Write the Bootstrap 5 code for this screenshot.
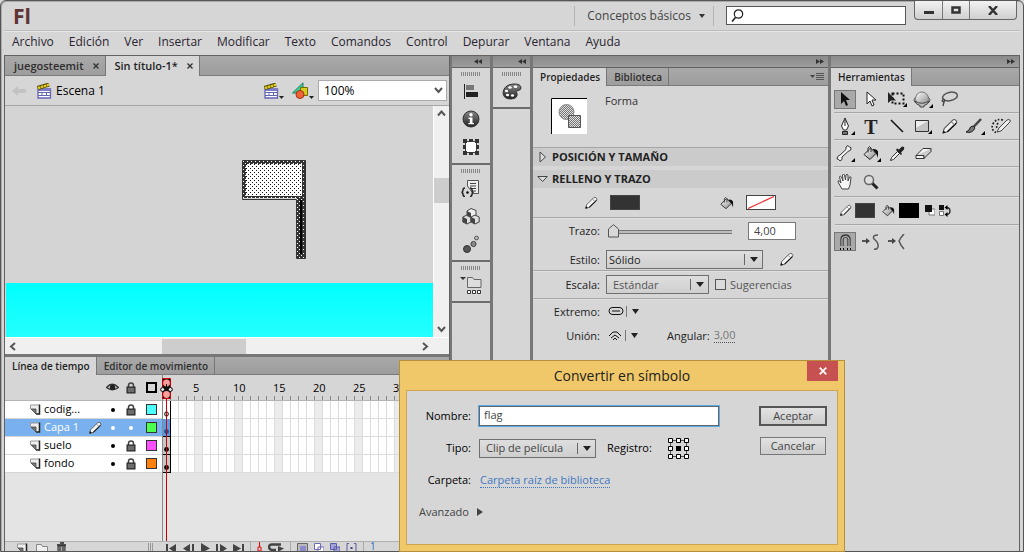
<!DOCTYPE html>
<html lang="es">
<head>
<meta charset="utf-8">
<meta name="viewport" content="width=device-width, initial-scale=1">
<title>Fl - Sin título-1*</title>
<link href="https://cdn.jsdelivr.net/npm/bootstrap@5.3.0/dist/css/bootstrap.min.css" rel="stylesheet">
<style>
:root{--face:#d6d6d6;--edge:#626262;--rule:#a6a6a6;--ink:#2b2b2b}
body{font:12px/16px "Open Sans","Noto Sans",sans-serif;color:#222;background:var(--face)}
.app{border:1px solid #555;border-radius:6px 6px 0 0;background:#d6d6d6;box-shadow:inset 1px 1px 0 #aaa}
button,input,select{font:inherit;color:inherit;border-radius:0}
button{background:none;border:0;padding:0}
svg{display:block;flex:none}
.ui{font-size:11px;line-height:16px}

/* title and menu */
.titlebar{height:30px;margin:0 3px;border-bottom:1px solid #bcbcbc;box-shadow:0 1px 0 #e6e6e6}
.brand-fl{font-size:21px;line-height:24px;color:#5e3434;padding-left:9px}
.vrule{width:1px;height:20px;background:#b4b4b4}
.search-box{width:180px;height:19px;border:1px solid #555;background:#fff}
.search-box input{border:0;outline:0;min-width:0;background:none}
.win-btns{border:1px solid #666;border-top:0;border-radius:0 0 4px 4px;height:19px;margin-right:3px;background:linear-gradient(#f2f2f2,#cfcfcf)}
.win-btns button{height:18px;width:27px;display:grid;place-items:center}
.win-btns button+button{border-left:1px solid #777}
.win-btns button:last-child{width:47px}
.menubar{height:24px;margin-left:3px;gap:15px;padding-bottom:2px}
.menubar a{color:#2a2430;text-decoration:none}

/* workspace columns */
.workspace{display:grid;grid-template-columns:minmax(0,1fr) 40px 40px 298px 191px;margin:0 3px;border:1px solid var(--edge);border-width:1px 1px 0 1px}
.left-col{display:grid;grid-template-rows:minmax(0,20fr) minmax(0,13fr);gap:3px;background:#777;border-right:1px solid var(--edge)}
.dock{border-left:3px solid #777}
.dock.first{border-left-width:2px}
.dock-top{height:12px;background:linear-gradient(#8a8a8a,#9d9d9d);border-bottom:1px solid var(--edge);padding-right:4px}
.dock.first .dock-top{padding-right:8px}
.tabstrip{background:linear-gradient(#a9a9a9,#9d9d9d);border-bottom:1px solid #7b7b7b}
.tabstrip button{font-weight:600;color:#2e2e2e;border-right:1px solid #777;margin-bottom:-1px;white-space:nowrap}
.tabstrip .on{background:var(--face);color:#1f1f1f}
.doc-tabs{height:20px;font-size:11px}
.doc-tabs button{padding:0 6px 0 9px;gap:9px}
.panel-tabs{height:18px;font-size:10px}
.panel-tabs button{padding:0 6px 0 7px}

/* document */
.editbar{height:30px;border-bottom:1px solid var(--rule);padding:0 2px 0 7px}
.zoom-pick{width:129px;height:21px;border:1px solid #aaa;appearance:none;padding:0 5px;color:#000;background:#fff url("data:image/svg+xml,%3Csvg xmlns='http://www.w3.org/2000/svg' width='9' height='7'%3E%3Cpath d='M1 1l3.500 4L8 1' fill='none' stroke='%23555' stroke-width='2'/%3E%3C/svg%3E") no-repeat right 3px center}
.stage{background:#d4d4d4;position:relative}
.sea{height:54px;background:linear-gradient(#00ffff,#24ffff);margin-left:1px}
.flag{position:absolute;left:237px;bottom:78px}
.sb-v{width:16px;background:#f0f0f0;border-left:1px solid #fff}
.sb-thumb{background:#cdcdcd;flex:none}
.sb-h{height:17px;background:#f0f0f0;border-top:1px solid #fff;padding:0 20px 0 4px}
.g1{flex:1}.g2{flex:2}.g5{flex:5}.g6{flex:6}

/* timeline */
.timeline{background:#e4e4e4}
.tl-cols{display:grid;grid-template-columns:157px minmax(0,1fr)}
.tl-head{height:26px;background:var(--face);border-bottom:1px solid #b4b4b4}
.lay{display:grid;grid-template-columns:17px 43px 16px 19px 18px 22px;padding-left:22px;height:18px;align-items:center;background:#fff;border-bottom:1px solid #d6d6d6;line-height:15px}
.lay>*{justify-self:center}
.lay>.nm{justify-self:start;align-self:start;white-space:nowrap}
.lay.head{background:none;border:0;height:25px}
.lay.sel{background:#79b0ee;color:#fff}
.sw{width:11px;height:11px;border:1px solid #333;display:block}
.frames{border-left:1px solid #888;position:relative}
.fr{height:18px;border-bottom:1px solid #dcdcdc;background:repeating-linear-gradient(90deg,transparent 0 7px,#dcdcdc 7px 8px),repeating-linear-gradient(90deg,#fff 0 32px,#ececec 32px 40px)}
.kf{width:8px;height:18px;border-right:1px solid #000;border-bottom:1px solid #000;background:#c8c8c8;display:grid;place-items:end center;padding-bottom:2px}
.ruler{height:25px;padding-left:30px;background:repeating-linear-gradient(90deg,transparent 0 7px,#888 7px 8px) 0 bottom/100% 4px no-repeat}
.ruler span{flex:0 0 40px}
.playhead{position:absolute;left:-1px;top:3px;bottom:0;width:9px}
.tl-foot{height:10px;background:var(--face);border-top:1px solid #b0b0b0;overflow:hidden}
.transport{gap:6px;line-height:8px;padding-left:4px}
.frame-no{font-size:10px;color:#2f6fbd}

/* icon docks */
.grp{border-bottom:2px solid #6c6c6c;padding:4px 0 2px}
.grip{width:20px;height:4px;margin:0 auto 1px 9px;background:repeating-linear-gradient(90deg,#888 0 1px,transparent 1px 2px)}
.grp button{display:grid;place-items:center;width:37px;height:28px}

/* properties */
.rule{border-bottom:1px solid var(--rule);box-shadow:0 1px 0 #e0e0e0}
.sect{height:18px;background:#cbcbcb;font-weight:700;gap:5px;padding-left:6px;line-height:16px}
.sect.open{padding-left:4px;gap:4px}
.lbl{width:67px;text-align:right;flex:none}
.inked{border:1px solid #444;width:30px;height:15px;padding:0;display:block}
.pick{height:19px;appearance:none;border:1px solid #707070;padding:0 6px;line-height:16px;background:url("data:image/svg+xml,%3Csvg xmlns='http://www.w3.org/2000/svg' width='18' height='11'%3E%3Cpath d='M.5 0v11' stroke='%23666'/%3E%3Cpath d='M6 3h8l-4 5z' fill='%23222'/%3E%3C/svg%3E") no-repeat right 0 center,linear-gradient(#dedede,#cfcfcf)}
.thick{appearance:none;width:124px;height:14px;background:linear-gradient(#777,#777) 0 6px/100% 1px no-repeat,linear-gradient(#777,#777) 0 9px/100% 1px no-repeat,linear-gradient(#bbb,#bbb) 0 7px/100% 2px no-repeat;margin:0}
.thick::-webkit-slider-thumb{appearance:none;width:11px;height:14px;background:url("data:image/svg+xml,%3Csvg xmlns='http://www.w3.org/2000/svg' width='11' height='14'%3E%3Cpath d='M.5 13V5L5.500 .7 10.500 5v8z' fill='%23d8d8d8' stroke='%23555'/%3E%3C/svg%3E")}
.num{width:48px;height:18px;border:1px solid #777;padding:0 5px 1px;background:#fff;color:#444}
.chk{appearance:none;width:11px;height:11px;border:1px solid #555;margin:0;background:#dcdcdc}
.dots{border-bottom:1px dotted #555;line-height:14px}

/* tools */
.tool-row{display:grid;grid-template-columns:repeat(7,26px);height:27px;align-items:center;margin-left:3px}
.tool-row button{width:22px;height:19px;display:grid;place-items:center;border:1px solid transparent}
.tool-row button.on{border-color:#777;background:#a9a9a9}
.type-t{font:700 20px/18px "Liberation Serif",serif;color:#222}

/* dialog */
.dlg{position:absolute;left:399px;top:360px;width:446px;min-height:192px;background:#f0c869;border:1px solid #b58f3c;padding:0 6px 6px}
.dlg-title{font-size:14px;line-height:20px;color:#222;padding:5px 0 4px}
.dlg-x{position:absolute;right:6px;top:0;width:31px;height:20px;background:#c75050;display:grid;place-items:center}
.dlg-body{background:var(--face);border:1px solid #cda552;height:155px;padding:15px 10px 0 0;color:#444}
.dlg-body .lbl{width:64px}
.name-box{width:240px;height:20px;border:1px solid #666;outline:1px solid #5aaae8;padding:0 4px 4px;background:#fff}
.push{width:66px;height:18px;border:1px solid #777;background:linear-gradient(#e2e2e2,#cdcdcd);line-height:14px}
.push.main{width:68px;height:20px;border:2px solid #555}
.dlg a{color:#4278c0;text-decoration:none;border-bottom:1px dotted #4278c0}
</style>
</head>
<body class="vh-100 overflow-hidden position-relative">
<svg width="0" height="0" class="position-absolute" aria-hidden="true">
<defs>
<linearGradient id="gm" x1="0" y1="0" x2="1" y2="1"><stop offset="0" stop-color="#fff"/><stop offset="1" stop-color="#888"/></linearGradient>
<linearGradient id="gd" x1="0" y1="0" x2="0" y2="1"><stop offset="0" stop-color="#888"/><stop offset="1" stop-color="#222"/></linearGradient>
<pattern id="pw" width="4" height="4" patternUnits="userSpaceOnUse"><rect width="4" height="4" fill="#fff"/><path d="M0 0h1v1H0zM2 2h1v1H2z" fill="#111"/></pattern>
<pattern id="pk" width="4" height="4" patternUnits="userSpaceOnUse"><rect width="4" height="4" fill="#333"/><path d="M1 1h1v1H1zM3 3h1v1H3z" fill="#fff"/></pattern>
<pattern id="ck" width="2" height="2" patternUnits="userSpaceOnUse"><rect width="2" height="2" fill="#ddd"/><path d="M0 0h1v1H0zM1 1h1v1H1z" fill="#777"/></pattern>
<symbol id="pencil" viewBox="0 0 16 16"><path d="M2 14l1-4 8-8q1.500-1.200 3 .2t.2 3L6 13z" fill="#f4f4f4" stroke="#555"/><path d="M6 13l8.200-8" stroke="#111" stroke-width="1.200"/><path d="M1.500 14.500l.7-3 2.300 2.300z" fill="#111"/><path d="M9.700 3.500l3 3" stroke="#888"/></symbol>
<symbol id="bucket" viewBox="0 0 17 16"><path d="M2 9.500L8.500 3l5.500 5.500L8 14.500z" fill="url(#gm)" stroke="#222"/><path d="M6 7.500V3q1.500-3 3 0v4" fill="none" stroke="#333"/><path d="M10.500 4q4.500-.5 5.500 2.500V13q-1-3-2-4.500z" fill="#111"/></symbol>
<symbol id="lock" viewBox="0 0 10 12"><path d="M2.500 6V3.500q0-2.500 2.500-2.500t2.500 2.500V6" fill="none" stroke="#444" stroke-width="1.500"/><rect x="1" y="5" width="8" height="6" fill="#555" stroke="#222"/><path d="M2 7h6M2 9h6" stroke="#aaa" stroke-width=".6"/></symbol>
<symbol id="page" viewBox="0 0 11 11"><path d="M1 1h8.500v9H6L1 5z" fill="#eee"/><path d="M.5 5V1H9" fill="none" stroke="#999"/><path d="M1 5h5v5z" fill="#777" stroke="#444" stroke-width=".8"/><path d="M9.500.5v9.500H6" fill="none" stroke="#222" stroke-width="1.500"/></symbol>
<symbol id="clap" viewBox="0 0 16 16"><path d="M2 6h12.500v9H2z" fill="#fff" stroke="#6464b4" stroke-width="1.300"/><path d="M2 9.500h12.500M2 12.500h12M6 10V12m4.500-2.500V12" stroke="#6464b4"/><path d="M2 6h12.500v2H2z" fill="#7c7cc8"/><path d="M1.500 5L13 1.500" stroke="#4a4200" stroke-width="4"/><path d="M2 5L13 1.700" stroke="#e2cc20" stroke-width="2.400" stroke-dasharray="2.500 .5"/></symbol>
</defs></svg>

<div class="app h-100 d-flex flex-column">
<header>
  <div class="titlebar d-flex align-items-center">
    <strong class="brand-fl">Fl</strong>
    <span class="vrule ms-auto"></span>
    <button class="d-flex align-items-center ps-2 ms-1" style="color:#444">Conceptos básicos<svg class="ms-2" width="6" height="4"><path d="M0 0h6L3 4z" fill="#333"/></svg></button>
    <span class="vrule mx-2"></span>
    <label class="search-box d-flex align-items-center ps-1 ms-1"><svg width="13" height="14" viewBox="0 0 13 14"><circle cx="7.500" cy="5" r="4.200" fill="none" stroke="#222" stroke-width="1.200"/><path d="M4.500 8.500L1 12.500" stroke="#222" stroke-width="1.700"/></svg><input type="search" aria-label="Buscar"></label>
    <div class="win-btns d-flex align-self-start ms-2">
      <button aria-label="Minimizar"><svg width="10" height="10"><path d="M0 6h10v3H0z" fill="#333"/></svg></button>
      <button aria-label="Maximizar"><svg width="10" height="8"><path d="M1.500 1.500h7v5h-7z" fill="none" stroke="#333" stroke-width="2.500"/></svg></button>
      <button aria-label="Cerrar"><svg width="10" height="9"><path d="M1 0l8 9M9 0L1 9" stroke="#333" stroke-width="2.400"/></svg></button>
    </div>
  </div>
  <nav class="menubar d-flex align-items-center ps-2">
    <a href="#">Archivo</a><a href="#">Edición</a><a href="#">Ver</a><a href="#">Insertar</a><a href="#">Modificar</a><a href="#">Texto</a><a href="#">Comandos</a><a href="#">Control</a><a href="#">Depurar</a><a href="#">Ventana</a><a href="#">Ayuda</a>
  </nav>
</header>

<main class="workspace flex-grow-1">
  <div class="left-col">
    <section class="d-flex flex-column overflow-hidden" style="background:#d6d6d6">
      <div class="tabstrip doc-tabs d-flex">
        <button class="d-flex align-items-center">juegosteemit<svg width="6" height="6"><path d="M.5.5l5 5m0-5l-5 5" stroke="#333" stroke-width="1.400"/></svg></button>
        <button class="on d-flex align-items-center">Sin título-1*<svg width="6" height="6"><path d="M.5.5l5 5m0-5l-5 5" stroke="#333" stroke-width="1.400"/></svg></button>
      </div>
      <div class="editbar d-flex align-items-center">
        <svg width="14" height="12" viewBox="0 0 14 12"><path d="M0 6l6-5v3h8v4H6v3z" fill="#c2c2c2"/></svg>
        <svg width="16" height="16" style="margin-left:10px"><use href="#clap"/></svg>
        <span class="ms-1 text-black">Escena 1</span>
        <button class="ms-auto d-flex align-items-end" aria-label="Editar escena"><svg width="16" height="16"><use href="#clap"/></svg><svg width="5" height="3"><path d="M0 0h5L2.500 3z" fill="#222"/></svg></button>
        <button class="ms-2 me-1 d-flex align-items-end" aria-label="Editar símbolos"><svg width="17" height="17"><path d="M.5 11L11 .8v10z" fill="#3ccf9c" stroke="#1c7f60"/><path d="M8.500 5.500h7v8h-7z" fill="#d8cc20" stroke="#746c00"/><circle cx="8" cy="12.500" r="4" fill="#f06438" stroke="#a03010"/></svg><svg width="5" height="3"><path d="M0 0h5L2.500 3z" fill="#222"/></svg></button>
        <select class="zoom-pick" aria-label="Zoom"><option>100%</option></select>
      </div>
      <div class="d-flex flex-grow-1">
        <div class="stage flex-grow-1 d-flex flex-column justify-content-end">
          <svg class="flag" width="64" height="99"><path d="M1 1h62v97h-8V38H1z" fill="url(#pk)"/><path d="M.5.5h63v98h-9V39.500H.5z" fill="none" stroke="#333"/><path d="M4 4h56v32H4z" fill="url(#pw)"/><path d="M58 40h2v54h-2z" fill="#000"/></svg>
          <div class="sea"></div>
        </div>
        <div class="sb-v d-flex flex-column align-items-center py-1">
          <svg width="9" height="7"><path d="M1 5.500l3.500-4 3.500 4" fill="none" stroke="#555" stroke-width="2"/></svg>
          <span class="g1"></span><span class="sb-thumb w-100" style="height:25px"></span><span class="g2"></span>
          <svg width="9" height="7"><path d="M1 1l3.500 4L8 1" fill="none" stroke="#555" stroke-width="2"/></svg>
        </div>
      </div>
      <div class="sb-h d-flex align-items-center">
        <svg width="7" height="9"><path d="M6 1L2 4.500 6 8" fill="none" stroke="#555" stroke-width="2"/></svg>
        <span class="g5"></span><span class="sb-thumb" style="width:84px;height:15px"></span><span class="g6"></span>
        <svg width="7" height="9"><path d="M1 1l4 3.500L1 8" fill="none" stroke="#555" stroke-width="2"/></svg>
      </div>
    </section>

    <section class="timeline d-flex flex-column overflow-hidden">
      <div class="tabstrip panel-tabs d-flex"><button class="on">Línea de tiempo</button><button>Editor de movimiento</button></div>
      <div class="tl-cols flex-grow-1">
        <div class="text-black">
          <div class="tl-head"><div class="lay head ui"><span></span><span></span><span></span>
            <svg width="13" height="9" viewBox="0 0 13 9"><path d="M.5 4.500Q6 -2 12.500 4.500 6 9 .5 4.500z" fill="#ccc" stroke="#333" stroke-width="1.300"/><circle cx="6.500" cy="4.300" r="2.700" fill="#222"/></svg>
            <svg width="10" height="12"><use href="#lock"/></svg>
            <span class="sw" style="border-width:2px;border-color:#000"></span></div></div>
          <div class="lay ui"><svg width="11" height="11"><use href="#page"/></svg><span class="nm">codig...</span><span></span><svg width="4" height="4"><circle cx="2" cy="2" r="2"/></svg><svg width="10" height="12"><use href="#lock"/></svg><span class="sw" style="background:#4dffff"></span></div>
          <div class="lay ui sel"><svg width="11" height="11"><use href="#page"/></svg><span class="nm">Capa 1</span><svg width="14" height="14"><use href="#pencil"/></svg><svg width="4" height="4"><circle cx="2" cy="2" r="2" fill="#fff"/></svg><svg width="4" height="4"><circle cx="2" cy="2" r="2" fill="#fff"/></svg><span class="sw" style="background:#4fff4f"></span></div>
          <div class="lay ui"><svg width="11" height="11"><use href="#page"/></svg><span class="nm">suelo</span><span></span><svg width="4" height="4"><circle cx="2" cy="2" r="2"/></svg><svg width="10" height="12"><use href="#lock"/></svg><span class="sw" style="background:#ff4fff"></span></div>
          <div class="lay ui"><svg width="11" height="11"><use href="#page"/></svg><span class="nm">fondo</span><span></span><svg width="4" height="4"><circle cx="2" cy="2" r="2"/></svg><svg width="10" height="12"><use href="#lock"/></svg><span class="sw" style="background:#ff800d"></span></div>
        </div>
        <div class="frames">
          <div class="tl-head"><div class="ruler d-flex align-items-center text-black ui"><span>5</span><span>10</span><span>15</span><span>20</span><span>25</span><span>30</span></div></div>
          <div class="fr"><div class="kf" style="background:#fff;border-bottom:0"><svg width="5" height="6"><ellipse cx="2.500" cy="3" rx="1.800" ry="2.200" fill="#fff" stroke="#000"/></svg></div></div>
          <div class="fr"><div class="kf" style="background:#5a9be6"><svg width="5" height="5"><circle cx="2.500" cy="2.500" r="2.400" fill="#1f4f94"/></svg></div></div>
          <div class="fr"><div class="kf"><svg width="5" height="5"><circle cx="2.500" cy="2.500" r="2.400"/></svg></div></div>
          <div class="fr"><div class="kf"><svg width="5" height="5"><circle cx="2.500" cy="2.500" r="2.400"/></svg></div></div>
          <div class="playhead d-flex flex-column align-items-center">
            <svg width="13" height="21" viewBox="0 0 13 21"><path d="M2.500.5h8v20h-8z" fill="#111" stroke="#c00"/><circle cx="6.500" cy="5" r="3.400" fill="#ff9c9c"/><circle cx="6.500" cy="16.500" r="3.400" fill="#ff9c9c"/><circle cx="2.700" cy="11.500" r="2" fill="#eee" stroke="#000"/><circle cx="10.300" cy="11.500" r="2" fill="#eee" stroke="#000"/><path d="M6.500 6v4" stroke="#111"/></svg>
            <div class="flex-grow-1" style="width:1px;background:#d00000"></div>
          </div>
        </div>
      </div>
      <div class="tl-foot tl-cols">
        <div class="d-flex ps-2 gap-2">
          <button class="ms-1" aria-label="Nueva capa"><svg width="11" height="11"><use href="#page"/></svg></button>
          <button aria-label="Nueva carpeta"><svg width="12" height="11"><path d="M.5 1.500h5l1 2h5v8H.5z" fill="#eee" stroke="#888"/></svg></button>
          <button aria-label="Eliminar"><svg width="11" height="12"><path d="M1 3h9M4 1h4" stroke="#222" stroke-width="1.600"/><path d="M2 4h7v8H2zM4 5v6m3-6v6" fill="#aaa" stroke="#222"/></svg></button>
          <svg class="ms-auto me-2" width="6" height="10"><path d="M.5 1v9M2.500 1v9M4.500 1v9" stroke="#999"/></svg>
        </div>
        <div class="transport d-flex">
          <button aria-label="Primer fotograma"><svg width="11" height="10"><path d="M0 1h2v9H0zM10 1v9L3 5.500z" fill="#444"/></svg></button>
          <button aria-label="Retroceder"><svg width="11" height="10"><path d="M9 1h2v9H9zM7 1v9L0 5.500z" fill="#444"/></svg></button>
          <button aria-label="Reproducir"><svg width="10" height="10"><path d="M1 0v10L10 5.500z" fill="#444"/></svg></button>
          <button aria-label="Avanzar"><svg width="11" height="10"><path d="M0 1h2v9H0zM4 1v9l7-4.500z" fill="#444"/></svg></button>
          <button aria-label="Último fotograma"><svg width="11" height="10"><path d="M9 1h2v9H9zM0 1v9l8-4.500z" fill="#444"/></svg></button>
          <svg width="1" height="10"><path d="M0 0h1v10H0z" fill="#aaa"/></svg>
          <svg width="5" height="10"><path d="M2.500 0v5M1 5h3v4H1z" fill="none" stroke="#e00"/></svg>
          <svg width="16" height="10"><path d="M13 2.500H4q-3 0-3 2.500t3 3h4" fill="none" stroke="#444" stroke-width="2.500"/><path d="M10 4l6 2.500-6 3.500z" fill="#444"/></svg>
          <svg width="1" height="10"><path d="M0 0h1v10H0z" fill="#aaa"/></svg>
          <svg width="11" height="10"><path d="M.5 1.500h10v10H.5z" fill="#bbb" stroke="#666"/><path d="M3 4h6v7H3z" fill="#8c8ccc"/></svg>
          <svg width="10" height="10"><path d="M.5 1.500h6v6h-6zM4 5h6v7H4z" fill="#fff" stroke="#6a6ab8"/></svg>
          <svg width="10" height="10"><path d="M.5 1.500h6v6h-6zM4 5h6v7H4z" fill="#a4a4d8" stroke="#5c5ca8"/></svg>
          <svg width="11" height="10"><path d="M3 1.500H1v10M8 1.500h2v10" fill="none" stroke="#5c5ca8"/><path d="M4.500 5h2v2h-2z" fill="#448"/></svg>
          <svg width="1" height="10"><path d="M0 0h1v10H0z" fill="#aaa"/></svg>
          <span class="frame-no">1</span>
        </div>
      </div>
    </section>
  </div>

  <aside class="dock first">
    <div class="dock-top d-flex align-items-center justify-content-end"><svg width="8" height="5"><path d="M4 0v5L0 2.500zM8 0v5L4 2.500z" fill="#333"/></svg></div>
    <div class="grp"><div class="grip"></div>
      <button aria-label="Alinear"><svg width="16" height="15"><path d="M1.500 0v15" stroke="#222"/><path d="M3 1h8v5H3z" fill="#777"/><path d="M3 8h12v5H3z" fill="#222"/></svg></button>
      <button aria-label="Información"><svg width="18" height="18"><circle cx="9" cy="9" r="8" fill="url(#gd)" stroke="#333"/><circle cx="9" cy="4.800" r="1.700" fill="#fff"/><path d="M6.500 7.500h4V13H12v1.300H6.300V13h1.500V9H6.500z" fill="#fff"/></svg></button>
      <button aria-label="Transformar"><svg width="16" height="16"><path d="M2.500 2.500h11v11h-11z" fill="#fff" stroke="#444"/><path d="M0 0h4v4H0zM6 0h4v3H6zM12 0h4v4h-4zM0 6h3v4H0zM13 6h3v4h-3zM0 12h4v4H0zM6 13h4v3H6zM12 12h4v4h-4z" fill="#333"/></svg></button>
    </div>
    <div class="grp"><div class="grip"></div>
      <button aria-label="Fragmentos de código"><svg width="19" height="18"><path d="M6.500 7V1.500h11v13H12z" fill="#eee" stroke="#555"/><path d="M9 4.500h6M9 7h6M11 9.500h4M12 12h3" stroke="#444"/><path d="M4 9q-2 0-2 2t-1.500 2.500Q2 13.500 2 15.500T4 17.500M9 9q2 0 2 2t1.500 2.500Q11 13.500 11 15.500T9 17.500" fill="none" stroke="#222" stroke-width="1.500"/><circle cx="6.500" cy="13.500" r="1.200"/></svg></button>
      <button aria-label="Componentes"><svg width="18" height="17"><path d="M5 3l4-2.500 5 2V8L9.500 10 5 8z" fill="#eee" stroke="#444"/><path d="M.8 9L5 7l4 2v5l-4 2-4.200-2zM9 9l4-2 4.200 2v5L13 16l-4-2z" fill="#ddd" stroke="#444"/><path d="M1 9l4 2v5l-4-2zM9 9l4 2v5l-4-2zM5 3l4 2v5L5 8z" fill="#444"/></svg></button>
      <button aria-label="Preajustes de movimiento"><svg width="18" height="18"><circle cx="5" cy="14" r="3.500" fill="#555" stroke="#333"/><circle cx="11.500" cy="9" r="2.600" fill="#888" stroke="#444"/><circle cx="14.500" cy="3" r="1.900" fill="#bbb" stroke="#555"/></svg></button>
    </div>
    <div class="grp"><div class="grip"></div>
      <button aria-label="Proyecto"><svg width="22" height="20"><path d="M0 2h6L3 5z" fill="#333"/><path d="M7.500 12.500v-10h5l1.500 2h7v8z" fill="#ddd" stroke="#666"/><path d="M7.500 15.500h3v3h-3zM12.500 15.500h3v3h-3zM17.500 15.500h3v3h-3z" fill="#fff" stroke="#333"/></svg></button>
    </div>
  </aside>

  <aside class="dock">
    <div class="dock-top d-flex align-items-center justify-content-end"><svg width="8" height="5"><path d="M4 0v5L0 2.500zM8 0v5L4 2.500z" fill="#333"/></svg></div>
    <div class="grp"><div class="grip"></div>
      <button aria-label="Color"><svg width="20" height="17"><path d="M1 9.500Q2 2 11 1q8-.5 8 4 0 2-3 2.500t-1 3q1 5-6 5.500-8 0-8-6.500z" fill="url(#gd)" stroke="#333"/><g fill="#fff"><ellipse cx="4.500" cy="8" rx="1.600" ry="1.300"/><ellipse cx="8" cy="4.500" rx="1.700" ry="1.300"/><ellipse cx="13.500" cy="3.700" rx="1.900" ry="1.300"/><ellipse cx="5.500" cy="12" rx="1.600" ry="1.300"/><ellipse cx="10.500" cy="12.500" rx="1.600" ry="1.200"/></g></svg></button>
    </div>
  </aside>

  <aside class="dock ui">
    <div class="dock-top d-flex align-items-center justify-content-end"><svg width="8" height="5"><path d="M0 0v5l4-2.500zM4 0v5l4-2.500z" fill="#333"/></svg></div>
    <div class="tabstrip panel-tabs d-flex"><button class="on">Propiedades</button><button>Biblioteca</button>
      <svg class="ms-auto me-1 align-self-center" width="14" height="8"><path d="M0 2h5L2.500 5z" fill="#444"/><path d="M6 .5h8M6 2.500h8M6 4.500h8M6 6.500h8" stroke="#555"/></svg></div>
    <div class="d-flex rule" style="height:62px;padding:12px 0 0 18px;gap:18px;color:#333">
      <svg width="36" height="36"><path d="M0 0h36v36H0z" fill="#fff"/><path d="M.5 36V.5H36" fill="none" stroke="#000"/><circle cx="15.500" cy="14" r="7.500" fill="url(#ck)" stroke="#888"/><path d="M17.500 17.500h12v12h-12z" fill="url(#ck)" stroke="#555"/></svg>
      <span style="margin-top:-5px">Forma</span>
    </div>
    <div class="sect d-flex align-items-center mb-1"><svg width="8" height="12"><path d="M1 1v10l5.500-5z" fill="#ddd" stroke="#444"/></svg>POSICIÓN Y TAMAÑO</div>
    <div class="sect open d-flex align-items-center"><svg width="11" height="8"><path d="M.8 1.500h9.500l-4.700 5z" fill="#ddd" stroke="#444"/></svg>RELLENO Y TRAZO</div>
    <div class="rule d-flex align-items-center" style="height:30px;padding-left:51px;gap:12px">
      <svg width="14" height="14"><use href="#pencil"/></svg><button class="inked" style="background:#333" aria-label="Color de trazo"></button>
      <svg style="margin-left:67px" width="15" height="14"><use href="#bucket"/></svg><button class="inked bg-white" aria-label="Color de relleno"><svg width="28" height="13"><path d="M1 12.500L27 .5" stroke="#e33" stroke-width="1.300"/></svg></button>
    </div>
    <div class="rule" style="padding-top:3px">
      <div class="d-flex align-items-center" style="height:20px"><label class="lbl" for="trazo">Trazo:</label><input id="trazo" class="thick ms-2" type="range" min="0" max="100" value="0"><input class="num ms-3" value="4,00" aria-label="Valor de trazo"></div>
      <div class="d-flex align-items-center mt-2" style="height:21px"><label class="lbl" for="estilo">Estilo:</label><select id="estilo" class="pick" style="width:157px;margin-left:6px;padding:0 2px"><option>Sólido</option></select><svg class="ms-3" width="15" height="15"><use href="#pencil"/></svg></div>
    </div>
    <div class="rule d-flex align-items-center" style="height:28px;color:#555"><label class="lbl" for="escala" style="color:#222">Escala:</label><select id="escala" class="pick" style="width:103px;margin-left:6px"><option>Estándar</option></select><input type="checkbox" class="chk" style="margin-left:6px" id="sug"><label class="ms-1" for="sug">Sugerencias</label></div>
    <div class="d-flex align-items-center" style="height:25px"><span class="lbl">Extremo:</span>
      <button class="d-flex align-items-center ms-2" aria-label="Extremo"><svg width="31" height="11"><path d="M4 1.500h8q3 .5 3 3.500t-3 3.500H4Q1 8 1 5t3-3.500zM4 5h8" fill="none" stroke="#111"/><path d="M18.500 0v11" stroke="#777"/><path d="M24 3h7l-3.500 5z" fill="#222"/></svg></button></div>
    <div class="d-flex align-items-center" style="height:23px"><span class="lbl">Unión:</span>
      <button class="d-flex align-items-center ms-2" aria-label="Unión"><svg width="31" height="11"><path d="M1 6l4-4h4l4 4M3 8l4-3 4 3M5 10l2-2 2 2" fill="none" stroke="#111"/><path d="M17.500 0v11" stroke="#777"/><path d="M23 3h7l-3.500 5z" fill="#222"/></svg></button>
      <span style="margin-left:28px">Angular:</span><span class="dots ms-1" style="color:#777">3,00</span></div>
  </aside>

  <aside class="dock">
    <div class="dock-top d-flex align-items-center justify-content-end"><svg width="8" height="5"><path d="M0 0v5l4-2.500zM4 0v5l4-2.500z" fill="#333"/></svg></div>
    <div class="tabstrip panel-tabs d-flex"><button class="on">Herramientas</button></div>
    <div class="tool-row rule">
      <button class="on" aria-label="Selección"><svg width="12" height="16"><path d="M2 1v12l3-3 2 5 2-1-2-5h4z" fill="#111"/></svg></button>
      <button aria-label="Subselección"><svg width="12" height="16"><path d="M2 1v12l3-3 2 5 2-1-2-5h4z" fill="#fff" stroke="#222"/></svg></button>
      <button aria-label="Transformación libre"><svg width="20" height="16"><path d="M5.500 2.500h11v10h-11z" fill="none" stroke="#111" stroke-width="2" stroke-dasharray="2 2"/><path d="M1 1v11l3-2.500h5z" fill="#222"/><path d="M20 12v4h-4z"/></svg></button>
      <button aria-label="Rotación 3D"><svg width="20" height="17"><ellipse cx="9" cy="9" rx="8" ry="4.500" fill="#ddd" stroke="#555"/><circle cx="9" cy="7.500" r="6.500" fill="url(#gm)" stroke="#777"/><path d="M1.500 10q7.500 4.500 15 0-2 4-5.500 4.500v1.500H7v-1.500Q3.500 14 1.500 10z" fill="#bbb" stroke="#444"/><path d="M20 13v4h-4z"/></svg></button>
      <button aria-label="Lazo"><svg width="18" height="16"><ellipse cx="10" cy="5.500" rx="7.500" ry="4.200" transform="rotate(-12 10 5.500)" fill="none" stroke="#555" stroke-width="1.500"/><path d="M4 8q-4 2 0 3 1-1 0-3m0 3l-1 4" fill="none" stroke="#444" stroke-width="1.300"/></svg></button>
    </div>
    <div class="tool-row rule">
      <button aria-label="Pluma"><svg width="19" height="17"><path d="M9 0L5.500 8l2 4h3l2-4z" fill="#fff" stroke="#222"/><path d="M9 2v6M6.500 13.500h5v3h-5z" fill="#777" stroke="#222"/><path d="M19 13v4h-4z"/></svg></button>
      <button aria-label="Texto"><span class="type-t">T</span></button>
      <button aria-label="Línea"><svg width="14" height="14"><path d="M1 1l12 12" stroke="#111" stroke-width="1.500"/></svg></button>
      <button aria-label="Rectángulo"><svg width="18" height="15"><path d="M1.500 1.500h13v11h-13z" fill="#c4c4c4" stroke="#333"/><path d="M2 2h12L2 9z" fill="#ececec"/><path d="M18 11v4h-4z"/></svg></button>
      <button aria-label="Lápiz"><svg width="17" height="17"><use href="#pencil"/></svg></button>
      <button aria-label="Pincel"><svg width="20" height="17"><path d="M16 1L8 9.500" stroke="#444" stroke-width="2.500"/><path d="M8 8q-3 0-4 4l-3 2q6 2 9-4z" fill="#777" stroke="#222"/><path d="M20 13v4h-4z"/></svg></button>
      <button aria-label="Deco"><svg width="20" height="17" viewBox="0 0 20 17"><path d="M12 2Q5 0 2 6t4 9M7 5q-2 3-1 5" fill="none" stroke="#222" stroke-width="1.700" stroke-dasharray="1.700 1.700"/><path d="M6 14l2-4 8-8q2-1 3 0t-1 3l-8 8z" fill="#eee" stroke="#444"/></svg></button>
    </div>
    <div class="tool-row rule">
      <button aria-label="Hueso"><svg width="19" height="17"><path d="M4 10l6-5.500q-1-3 2-4 1 2 3 2 1 3-3 4L6 12q1 3-2 4-1-2-3-2 0-3 3-4z" fill="#f4f4f4" stroke="#333"/><path d="M19 13v4h-4z"/></svg></button>
      <button aria-label="Cubo de pintura"><svg width="19" height="17" viewBox="0 0 19 17"><use href="#bucket" width="17" height="16"/><path d="M19 13v4h-4z"/></svg></button>
      <button aria-label="Cuentagotas"><svg width="17" height="17"><path d="M1.500 15.500l1-3 6-6 2 2-6 6z" fill="#eee" stroke="#333"/><path d="M7 5l5 5 1-1-1-1.500 3-3q1-3-2-3l-3 3-2-1z" fill="#222"/></svg></button>
      <button aria-label="Borrador"><svg width="17" height="13"><path d="M1 8.500l7-7h8l-7 7v3H1z" fill="#f4f4f4" stroke="#333"/><path d="M1 8.500h8v3l7-7v-3" fill="#ccc" stroke="#333"/></svg></button>
    </div>
    <div class="tool-row rule" style="height:30px">
      <button aria-label="Mano"><svg width="16" height="17"><path d="M5 16L1 9q0-2 1.500-1L4 10 2.500 4q.5-2 2 0L6 8 5.500 2q1-2 2 0L8.500 7 9 2q1-1.500 2 0v6l1.500-4q1.500-1 1.500 1l-1 7-1.500 4z" fill="#f6f6f6" stroke="#444"/></svg></button>
      <button aria-label="Zoom"><svg width="16" height="16"><path d="M9 9l5.500 5.500" stroke="#222" stroke-width="3"/><circle cx="6" cy="6" r="4.500" fill="#ddd" stroke="#666" stroke-width="1.500"/></svg></button>
    </div>
    <div class="rule d-flex align-items-center ps-1 ms-1" style="height:28px">
      <svg width="13" height="13"><use href="#pencil"/></svg><button class="inked" style="width:20px;background:#333;margin-left:3px" aria-label="Trazo"></button>
      <svg style="margin-left:6px" width="14" height="13"><use href="#bucket"/></svg><button class="inked ms-1" style="width:20px;background:#000;border-color:#000" aria-label="Relleno"></button>
      <svg style="margin-left:6px" width="10" height="11"><path d="M4 4h6v6H4z" fill="#fff" stroke="#777"/><path d="M0 0h7v7H0z" fill="#111"/></svg>
      <svg class="ms-1" width="14" height="12"><path d="M0 0h5v5H0z" fill="#111"/><path d="M.5 6.500h4v4h-4z" fill="#fff" stroke="#777"/><path d="M7 2.500q4 0 4 3.500t-4 3.500" fill="none" stroke="#222" stroke-width="1.300"/><path d="M5.500 2.500L8.500 0v5zM5.500 9.500l3-2.500v5z"/></svg>
    </div>
    <div class="tool-row" style="height:33px">
      <button class="on" aria-label="Ajustar a objetos"><svg width="13" height="16"><path d="M3 12V5.500q0-3.500 3.500-3.500T10 5.500V12" fill="none" stroke="#444" stroke-width="3.500"/><path d="M3 12V5.500Q3 2.500 6.500 2.500T10 5.500V12" fill="none" stroke="#ccc"/><path d="M1 14h1v2H1zM4 14h1v2H4zM8 14h1v2H8zM11 14h1v2h-1z"/></svg></button>
      <button aria-label="Suavizar"><svg width="18" height="16"><path d="M0 7h5" stroke="#555" stroke-width="2"/><path d="M4 4l4 3-4 3z" fill="#444"/><path d="M16 1q-6 0-4 4 5 4 4 8-1 3-4 2" fill="none" stroke="#555" stroke-width="1.500"/></svg></button>
      <button aria-label="Enderezar"><svg width="18" height="16"><path d="M0 7h5" stroke="#555" stroke-width="2"/><path d="M4 4l4 3-4 3z" fill="#444"/><path d="M16 0q-3 3-5 7 2 5 5 8" fill="none" stroke="#555" stroke-width="1.500"/></svg></button>
    </div>
  </aside>
</main>
</div>

<div class="dlg" role="dialog" aria-label="Convertir en símbolo">
  <div class="dlg-title d-flex justify-content-center">Convertir en símbolo</div>
  <button class="dlg-x" aria-label="Cerrar"><svg width="8" height="8"><path d="M.7.7l6.600 6.600m0-6.600L.7 7.300" stroke="#fff" stroke-width="1.700"/></svg></button>
  <form class="dlg-body ui d-flex">
    <div class="flex-grow-1">
      <div class="d-flex align-items-center" style="height:20px"><label class="lbl text-black" for="nom">Nombre:</label><input id="nom" class="name-box ms-2" value="flag"></div>
      <div class="d-flex align-items-center" style="height:20px;margin-top:12px"><label class="lbl text-black" for="tipo">Tipo:</label><select id="tipo" class="pick ms-2" style="width:117px"><option>Clip de película</option></select><span class="text-black" style="margin-left:11px">Registro:</span>
        <svg class="ms-3" width="21" height="21"><path d="M2.500 2.500h16v16h-16z" fill="none" stroke="#555"/><g fill="#fff" stroke="#000"><path d="M.5.5h4v4h-4zM8.500.5h4v4h-4zM16.500.5h4v4h-4zM.5 8.500h4v4h-4zM16.500 8.500h4v4h-4zM.5 16.500h4v4h-4zM8.500 16.500h4v4h-4zM16.500 16.500h4v4h-4z"/></g><path d="M8 8h5v5H8z"/></svg></div>
      <div class="d-flex align-items-center" style="height:20px;margin-top:12px"><span class="lbl text-black">Carpeta:</span><a href="#" style="margin-left:9px;line-height:15px">Carpeta raíz de biblioteca</a></div>
      <button type="button" class="d-flex align-items-center gap-2" style="margin:14px 0 0 12px">Avanzado<svg width="6" height="8"><path d="M0 0v8l6-4z" fill="#444"/></svg></button>
    </div>
    <div class="d-flex flex-column align-items-center" style="gap:11px"><button class="push main">Aceptar</button><button type="button" class="push">Cancelar</button></div>
  </form>
</div>
<script src="https://cdn.jsdelivr.net/npm/bootstrap@5.3.0/dist/js/bootstrap.bundle.min.js"></script>
</body>
</html>
